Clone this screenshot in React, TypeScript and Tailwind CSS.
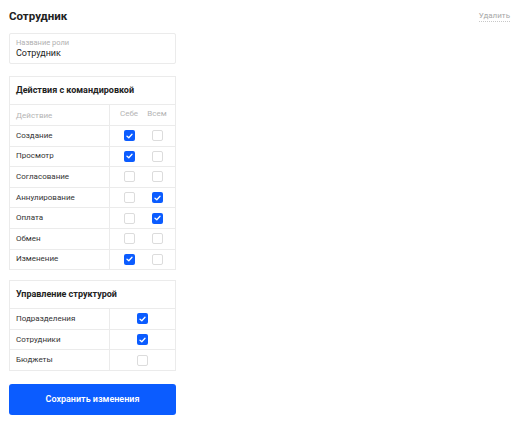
import React from "react";

function Check({ on }: { on: boolean }) {
  if (on) {
    return (
      <div className="w-[11px] h-[11px] rounded-[2px] bg-[#0b5cff] flex items-center justify-center">
        <svg width="7" height="6" viewBox="0 0 7 6" fill="none">
          <path d="M1 3.2L2.8 4.8L6 1.2" stroke="white" strokeWidth="1.3" strokeLinecap="round" strokeLinejoin="round" />
        </svg>
      </div>
    );
  }
  return <div className="w-[11px] h-[11px] rounded-[2px] border border-[#dcdcdc] bg-white" />;
}

const actions: [string, boolean, boolean][] = [
  ["Создание", true, false],
  ["Просмотр", true, false],
  ["Согласование", false, false],
  ["Аннулирование", false, true],
  ["Оплата", false, true],
  ["Обмен", false, false],
  ["Изменение", true, false],
];

const structure: [string, boolean][] = [
  ["Подразделения", true],
  ["Сотрудники", true],
  ["Бюджеты", false],
];

export default function App() {
  return (
    <div className="w-[520px] h-[427px] bg-white font-['Roboto',sans-serif] text-[#222] overflow-hidden">
      <div className="flex items-center justify-between h-[33px] pl-[9px] pr-[10px]">
        <div className="text-[11.5px] font-bold leading-none">Сотрудник</div>
        <div className="text-[8px] text-[#a8a8a8] leading-[10px] border-b border-dotted border-[#c8c8c8]">Удалить</div>
      </div>
      <div className="ml-[9px] w-[167px] flex flex-col">
        <div className="h-[31px] border border-[#ebebeb] rounded-[2px] pl-[6px] flex flex-col justify-center">
          <div className="text-[7.5px] text-[#b0b0b0] leading-[9px]">Название роли</div>
          <div className="text-[9px] text-[#222] leading-[12px]">Сотрудник</div>
        </div>

        <div className="mt-[12px] border border-[#ebebeb]">
          <div className="h-[27px] flex items-center pl-[6px] text-[9px] font-bold">Действия с командировкой</div>
          <div className="h-[21px] border-t border-[#ebebeb] flex">
            <div className="w-[100px] border-r border-[#ebebeb] pl-[6px] flex items-center text-[8px] text-[#b4b4b4] pt-[2px]">Действие</div>
            <div className="flex pl-[5px] items-center">
              <div className="w-[28px] text-center text-[8px] text-[#b4b4b4] -mt-[2px]">Себе</div>
              <div className="w-[28px] text-center text-[8px] text-[#b4b4b4] -mt-[2px]">Всем</div>
            </div>
          </div>
          {actions.map(([name, self, all]) => (
            <div key={name} className="h-[20.6px] border-t border-[#ebebeb] flex">
              <div className="w-[100px] border-r border-[#ebebeb] pl-[6px] flex items-center text-[8px] text-[#333]">{name}</div>
              <div className="flex pl-[5px] items-center">
                <div className="w-[28px] flex justify-center"><Check on={self} /></div>
                <div className="w-[28px] flex justify-center"><Check on={all} /></div>
              </div>
            </div>
          ))}
        </div>

        <div className="mt-[10px] border border-[#ebebeb]">
          <div className="h-[27px] flex items-center pl-[6px] text-[9px] font-bold">Управление структурой</div>
          {structure.map(([name, on]) => (
            <div key={name} className="h-[20.6px] border-t border-[#ebebeb] flex">
              <div className="w-[100px] border-r border-[#ebebeb] pl-[6px] flex items-center text-[8px] text-[#333]">{name}</div>
              <div className="flex-1 flex items-center justify-center"><Check on={on} /></div>
            </div>
          ))}
        </div>

        <button className="mt-[13px] h-[31px] rounded-[3px] bg-[#0b5cff] text-white text-[9px] font-semibold flex items-center justify-center">
          Сохранить изменения
        </button>
      </div>
    </div>
  );
}
